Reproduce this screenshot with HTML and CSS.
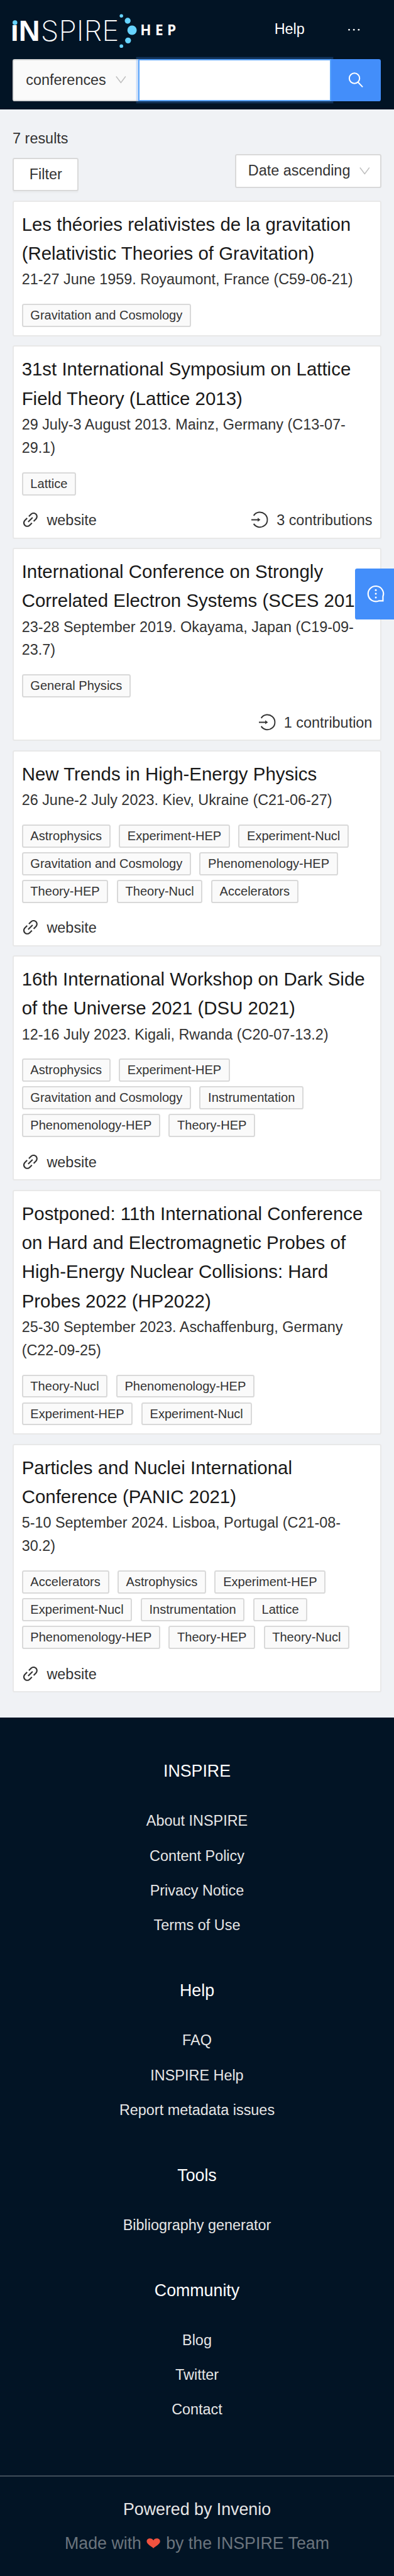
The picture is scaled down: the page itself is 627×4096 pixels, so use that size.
FILE: index.html
```html
<!DOCTYPE html>
<html lang="en">
<head>
<meta charset="utf-8">
<title>INSPIRE HEP - Conferences</title>
<link rel="stylesheet" href="styles.css">
</head>
<body>
<svg class="sprite" width="0" height="0" aria-hidden="true">
  <symbol id="link" viewBox="64 64 896 896"><path d="M574 665.4a8.03 8.03 0 0 0-11.3 0L446.5 781.6c-53.8 53.8-144.6 59.5-204 0-59.5-59.5-53.8-150.2 0-204l116.2-116.2c3.1-3.1 3.1-8.2 0-11.3l-39.8-39.8a8.03 8.03 0 0 0-11.3 0L191.4 526.5c-84.6 84.6-84.6 221.5 0 306s221.5 84.6 306 0l116.2-116.2c3.1-3.1 3.1-8.2 0-11.3L574 665.4zm258.6-474c-84.6-84.6-221.5-84.6-306 0L410.3 307.6a8.03 8.03 0 0 0 0 11.3l39.7 39.7c3.1 3.1 8.2 3.1 11.3 0l116.2-116.2c53.8-53.8 144.6-59.5 204 0 59.5 59.5 53.8 150.2 0 204L665.3 562.6a8.03 8.03 0 0 0 0 11.3l39.8 39.8c3.1 3.1 8.2 3.1 11.3 0l116.2-116.2c84.5-84.6 84.5-221.5 0-306.1zM610.1 372.3a8.03 8.03 0 0 0-11.3 0L372.3 598.7a8.03 8.03 0 0 0 0 11.3l39.6 39.6c3.1 3.1 8.2 3.1 11.3 0l226.4-226.4c3.1-3.1 3.1-8.2 0-11.3l-39.5-39.6z"/></symbol>
  <symbol id="login" viewBox="0 0 16 16"><path d="M2.200 4.100A7.100 7.100 0 1 1 2.200 11.900" fill="none" stroke="currentColor" stroke-width="1.200"/><path d="M0 8H6.200" stroke="currentColor" stroke-width="1.200"/><path d="M6 6.100 8.600 8 6 9.900z"/></symbol>
  <symbol id="down" viewBox="0 0 10 7"><path d="M.5.300 5 6.300 9.500.300" fill="none" stroke="currentColor" stroke-width=".9"/></symbol>
</svg>

<header class="header">
  <div class="topbar">
    <svg class="logo" viewBox="0 0 320 70" role="img" aria-label="INSPIRE HEP">
      <text class="logo-bold" x="-4" y="54" textLength="56" lengthAdjust="spacingAndGlyphs">ıN</text>
      <text class="logo-thin" x="53.500" y="54" textLength="149" lengthAdjust="spacingAndGlyphs">SPIRE</text>
      <text class="logo-hep" x="243" y="43" textLength="75">HEP</text>
      <g class="logo-dots">
        <circle cx="4.500" cy="19" r="4.500"/><circle cx="207" cy="6.300" r="3.300"/><circle cx="219" cy="15.500" r="5.600"/><circle cx="227.300" cy="33.500" r="8.900"/><circle cx="219.700" cy="53" r="5.600"/><circle cx="207" cy="63.700" r="3.400"/>
      </g>
    </svg>
    <nav class="topnav"><a>Help</a><svg class="dots" viewBox="0 0 12 4"><circle cx="1.500" cy="2" r=".85"/><circle cx="6.100" cy="2" r=".85"/><circle cx="10.700" cy="2" r=".85"/></svg></nav>
  </div>
  <div class="search">
    <div class="search-scope">conferences<svg class="chev"><use href="#down"/></svg></div>
    <div class="search-input"></div>
    <div class="search-button"><svg viewBox="0 0 15 15"><circle cx="6" cy="5.700" r="4.900"/><path d="M9.300 9.300 13.800 14"/></svg></div>
  </div>
</header>

<main class="results">
  <div class="count">7 results</div>
  <div class="tools">
    <div class="filter">Filter</div>
    <div class="sort">Date ascending<svg class="chev"><use href="#down"/></svg></div>
  </div>

  <article class="card">
    <h2>Les théories relativistes de la gravitation<br>(Relativistic Theories of Gravitation)</h2>
    <p>21-27 June 1959. Royaumont, France (C59-06-21)</p>
    <div class="tags"><span>Gravitation and Cosmology</span></div>
  </article>

  <article class="card">
    <h2>31st International Symposium on Lattice<br>Field Theory (Lattice 2013)</h2>
    <p>29 July-3 August 2013. Mainz, Germany (C13-07-<br>29.1)</p>
    <div class="tags"><span>Lattice</span></div>
    <div class="actions"><a><svg class="icon"><use href="#link"/></svg>website</a><a class="end"><svg class="icon"><use href="#login"/></svg>3 contributions</a></div>
  </article>

  <article class="card">
    <h2>International Conference on Strongly<br>Correlated Electron Systems (SCES 2019)</h2>
    <p>23-28 September 2019. Okayama, Japan (C19-09-<br>23.7)</p>
    <div class="tags"><span>General Physics</span></div>
    <div class="actions"><a class="end"><svg class="icon"><use href="#login"/></svg>1 contribution</a></div>
  </article>

  <article class="card">
    <h2>New Trends in High-Energy Physics</h2>
    <p>26 June-2 July 2023. Kiev, Ukraine (C21-06-27)</p>
    <div class="tags"><span>Astrophysics</span><span>Experiment-HEP</span><span>Experiment-Nucl</span><span>Gravitation and Cosmology</span><span>Phenomenology-HEP</span><span>Theory-HEP</span><span>Theory-Nucl</span><span>Accelerators</span></div>
    <div class="actions"><a><svg class="icon"><use href="#link"/></svg>website</a></div>
  </article>

  <article class="card">
    <h2>16th International Workshop on Dark Side<br>of the Universe 2021 (DSU 2021)</h2>
    <p>12-16 July 2023. Kigali, Rwanda (C20-07-13.2)</p>
    <div class="tags"><span>Astrophysics</span><span>Experiment-HEP</span><span>Gravitation and Cosmology</span><span>Instrumentation</span><span>Phenomenology-HEP</span><span>Theory-HEP</span></div>
    <div class="actions"><a><svg class="icon"><use href="#link"/></svg>website</a></div>
  </article>

  <article class="card">
    <h2>Postponed: 11th International Conference<br>on Hard and Electromagnetic Probes of<br>High-Energy Nuclear Collisions: Hard<br>Probes 2022 (HP2022)</h2>
    <p>25-30 September 2023. Aschaffenburg, Germany<br>(C22-09-25)</p>
    <div class="tags"><span>Theory-Nucl</span><span>Phenomenology-HEP</span><span>Experiment-HEP</span><span>Experiment-Nucl</span></div>
  </article>

  <article class="card">
    <h2>Particles and Nuclei International<br>Conference (PANIC 2021)</h2>
    <p>5-10 September 2024. Lisboa, Portugal (C21-08-<br>30.2)</p>
    <div class="tags"><span>Accelerators</span><span>Astrophysics</span><span>Experiment-HEP</span><span>Experiment-Nucl</span><span>Instrumentation</span><span>Lattice</span><span>Phenomenology-HEP</span><span>Theory-HEP</span><span>Theory-Nucl</span></div>
    <div class="actions"><a><svg class="icon"><use href="#link"/></svg>website</a></div>
  </article>
</main>

<div class="feedback"><svg viewBox="0 0 18 18"><path d="M15.800 11.600V15.800H11.800A7.300 7.300 0 1 1 15.800 11.600Z"/><circle cx="9" cy="5.500" r=".9"/><circle cx="9" cy="9" r=".9"/><circle cx="9" cy="12.500" r=".9"/></svg></div>

<footer class="footer">
  <section><h3>INSPIRE</h3><a>About INSPIRE</a><a>Content Policy</a><a>Privacy Notice</a><a>Terms of Use</a></section>
  <section><h3>Help</h3><a>FAQ</a><a>INSPIRE Help</a><a>Report metadata issues</a></section>
  <section><h3>Tools</h3><a>Bibliography generator</a></section>
  <section><h3>Community</h3><a>Blog</a><a>Twitter</a><a>Contact</a></section>
  <div class="credits">
    <div class="powered">Powered by Invenio</div>
    <div class="made">Made with <svg class="heart" viewBox="0 0 14 11"><path d="M7 10.500C5.500 8.500 0 6.500 0 3.300 0 1.200 1.500.200 3.400.200 5 .200 6.300 1 7 2.300 7.700 1 9 .200 10.600.200 12.500.200 14 1.200 14 3.300 14 6.500 8.500 8.500 7 10.500Z"/></svg> by the INSPIRE Team</div>
  </div>
</footer>
</body>
</html>
```
FILE: styles.css
```css
/* 1rem = 10 layout units */
html { font-size: 16.732px; background: #f0f2f5; }
* { box-sizing: border-box; }
body { margin: 0; font: 1.4rem/2.2rem "Liberation Sans", Arial, sans-serif; color: #333; position: relative; background: #f0f2f5; overflow-x: hidden; }
h2, h3, p { margin: 0; font-weight: 400; }
svg { display: block; flex: none; }
.sprite { position: absolute; }

.header { background: #021425; height: 10.4rem; padding: 0 1.2rem; }
.topbar { display: flex; height: 5.6rem; justify-content: space-between; }
.logo { width: 16rem; height: 3.5rem; margin-top: 1.2rem; overflow: visible; }
.logo-bold, .logo-thin, .logo-hep { fill: #fff; }
.logo-bold { font: bold 56px "Liberation Sans", sans-serif; }
.logo-thin { font: 200 53px Inter, sans-serif; }
.logo-hep { font: bold 27px "Open Sans", sans-serif; letter-spacing: 7px; }
.logo-dots { fill: #66d3ff; }
.topnav { display: flex; align-items: center; color: #fff; padding-right: 2rem; gap: 4.1rem; }
.dots { width: 1.2rem; height: .4rem; fill: #fff; }
.search { display: flex; height: 4rem; }
.search-scope { width: 11.95rem; display: flex; align-items: center; gap: .9rem; padding-left: 1.15rem; background: #fafafa; border: 2px solid #d9d9d9; border-right: 0; border-radius: .2rem 0 0 .2rem; }
.chev { width: 1rem; height: .7rem; color: #bfbfbf; }
.search-input { flex: 1; background: #fff; border: 2px solid #57a3fb; box-shadow: 0 0 0 .2rem rgba(65, 141, 249, .25); }
.search-button { width: 4.7rem; background: #438efa; border-radius: 0 .2rem .2rem 0; display: grid; place-items: center; position: relative; margin-right: .06rem; }
.search-button svg { width: 1.5rem; height: 1.5rem; fill: none; stroke: #fff; stroke-width: 1.2; }

.results { padding: 1.6rem 1.2rem 2.4rem; }
.count { margin-top: .05rem; height: 2.2rem; }
.tools { display: flex; justify-content: space-between; height: 4.8rem; padding-top: .4rem; }
.filter { height: 3.2rem; width: 6.3rem; margin-top: .35rem; display: grid; place-items: center; background: #fff; border: 2px solid #d9d9d9; border-radius: .2rem; box-shadow: 0 .2rem 0 rgba(0, 0, 0, .02); }
.sort { height: 3.2rem; width: 13.95rem; display: flex; align-items: center; gap: .85rem; padding-left: 1.15rem; background: #fff; border: 2px solid #d9d9d9; border-radius: .2rem; }

.card { background: #fff; border: 2px solid #e8e8e8; border-radius: .2rem; padding: .78rem .75rem; margin-bottom: .86rem; }
.card:last-child { margin-bottom: 0; }
.card h2 { font-size: 1.76rem; line-height: 2.766rem; color: #191919; white-space: nowrap; }
.card p { white-space: nowrap; }
.tags { display: flex; flex-wrap: wrap; gap: .43rem .8rem; padding-top: 1.2rem; }
.tags span { height: 2.2rem; line-height: 1.95rem; font-size: 1.2rem; padding: 0 .7rem; background: #fafafa; border: 2px solid #d9d9d9; border-radius: .2rem; white-space: nowrap; }
.actions { display: flex; height: 3.23rem; padding-top: 1.3rem; }
.actions a { display: flex; align-items: center; height: 2.2rem; gap: .78rem; }
.actions .end { margin-left: auto; }
.icon { width: 1.6rem; height: 1.6rem; fill: #333; color: #333; margin-bottom: .1rem; }

.feedback { position: absolute; right: 0; top: 54.05rem; width: 3.7rem; height: 4.8rem; background: #438efa; border-radius: .2rem 0 0 .2rem; padding: 1.5rem 0 0 1.05rem; }
.feedback svg { width: 1.8rem; height: 1.8rem; fill: #fff; }
.feedback path { fill: none; stroke: #fff; stroke-width: 1.3; }

.footer { background: #021425; color: #e6e6e6; text-align: center; height: 81.6rem; }
.footer section { padding-top: 3.9rem; display: flex; flex-direction: column; gap: 1.11rem; }
.footer h3 { font-size: 1.6rem; line-height: 2.5rem; color: #fff; margin-bottom: 1.22rem; }
.credits { margin-top: 5.15rem; border-top: 2px solid #3f4d59; padding-top: 1.9rem; font-size: 1.6rem; line-height: 2.5rem; }
.made { margin-top: .7rem; color: #6b747d; }
.heart { display: inline-block; width: 1.45rem; height: 1rem; fill: #f0523f; }
```
